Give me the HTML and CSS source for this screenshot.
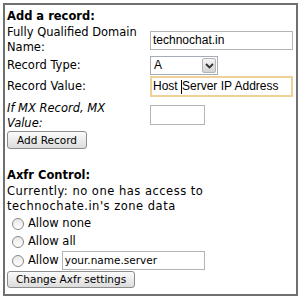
FILE: index.html
```html
<!DOCTYPE html>
<html lang="en">
<head>
  <meta charset="UTF-8">
  <title>DNS Records</title>
  <link rel="stylesheet" href="styles.css">
</head>
<body>
  <div class="panel">
    <!-- Add record form -->
    <div class="section-title">Add a record:</div>
    <div class="form-grid">
      <div class="label">Fully Qualified Domain Name:</div>
      <div class="field"><span class="text-input wide">technochat.in</span></div>

      <div class="label">Record Type:</div>
      <div class="field">
        <span class="select">
          <span class="select-value">A</span>
          <span class="select-arrow">
            <svg width="9" height="6" viewBox="0 0 9 6"><path d="M1 1 L4.5 4.5 L8 1" fill="none" stroke="#333" stroke-width="1.8"/></svg>
          </span>
        </span>
      </div>

      <div class="label">Record Value:</div>
      <div class="field"><span class="text-input wide focused">Host <span class="caret"></span>Server IP Address</span></div>

      <div class="label italic spaced">If MX Record, MX Value:</div>
      <div class="field"><span class="text-input small"></span></div>
    </div>
    <button class="button">Add Record</button>

    <!-- Axfr control -->
    <div class="section-title axfr">Axfr Control:</div>
    <div class="note">Currently: no one has access to technochate.in's zone data</div>
    <div class="radio-list">
      <div class="radio-row"><span class="radio"></span>Allow none</div>
      <div class="radio-row"><span class="radio"></span>Allow all</div>
      <div class="radio-row"><span class="radio"></span>Allow <span class="text-input server">your.name.server</span></div>
    </div>
    <button class="button axfr-btn">Change Axfr settings</button>
  </div>
</body>
</html>
```

FILE: styles.css
```css
body {
  margin: 0;
  padding: 3px;
  background-color: #fff;
  color: #000;
  font-family: 'DejaVu Sans', Verdana, sans-serif;
  font-size: 11.5px;
  line-height: 15px;
}

.panel {
  width: 289px;
  height: 285px;
  border: 2px solid #707070;
  padding: 4px 0 0 2px;
  box-sizing: content-box;
}

.section-title {
  font-weight: bold;
}

.section-title.axfr {
  margin-top: 19px;
}

.form-grid {
  display: grid;
  grid-template-columns: 143px 143px;
  align-items: center;
  row-gap: 1px;
  margin-top: 1px;
}

.label {
  max-width: 134px;
}

.label.italic {
  font-style: italic;
}

.label.spaced {
  padding-top: 3px;
}

.field {
  display: flex;
  align-items: center;
}

.text-input {
  display: inline-flex;
  align-items: center;
  box-sizing: border-box;
  height: 19px;
  padding: 0 2px;
  border: 1px solid #b4b4b4;
  background-color: #fff;
  font-family: 'Liberation Sans', Arial, sans-serif;
  font-size: 12px;
  white-space: pre;
}

.text-input.wide {
  width: 143px;
}

.text-input.focused {
  height: 21px;
  border: 2px solid #efd198;
  padding: 0 1px;
}

.text-input.small {
  width: 55px;
  height: 20px;
}

.text-input.server {
  width: 143px;
  height: 19px;
  margin-left: 3px;
  font-family: 'DejaVu Sans', Verdana, sans-serif;
  font-size: 10.5px;
}

.caret {
  display: inline-block;
  width: 1px;
  height: 14px;
  background-color: #000;
}

.select {
  display: inline-flex;
  align-items: center;
  justify-content: space-between;
  box-sizing: border-box;
  width: 68px;
  height: 19px;
  padding: 1px;
  border: 1px solid #a5acb5;
  font-family: 'Liberation Sans', Arial, sans-serif;
  font-size: 12px;
}

.select-value {
  padding-left: 2px;
}

.select-arrow {
  display: flex;
  align-items: center;
  justify-content: center;
  width: 14px;
  height: 15px;
  border: 1px solid #b5b5b5;
  border-radius: 2px;
  background: linear-gradient(#f4f4f4, #d4d4d4);
  box-sizing: border-box;
}

.button {
  display: block;
  height: 18px;
  margin: 0;
  padding: 0 9px;
  border: 1px solid #8c8c8c;
  border-radius: 3px;
  background: linear-gradient(#fbfbfb, #dcdcdc);
  font-family: 'DejaVu Sans', Verdana, sans-serif;
  font-size: 10.5px;
  line-height: 16px;
  color: #000;
}

.button.axfr-btn {
  height: 17px;
  margin-top: 1px;
  padding: 0 8px;
  line-height: 15px;
}

.note {
  max-width: 270px;
  margin-top: 1px;
  letter-spacing: 0.5px;
}

.radio-list {
  display: flex;
  flex-direction: column;
  gap: 1px;
  margin-top: 1px;
}

.radio-row {
  display: flex;
  align-items: center;
  height: 17px;
}

.radio-row:last-child {
  height: 19px;
}

.radio {
  width: 10px;
  height: 10px;
  margin: 0 4px 0 5px;
  border: 1px solid #888;
  border-radius: 50%;
  background: linear-gradient(#e8e8e8, #fff);
}
```
